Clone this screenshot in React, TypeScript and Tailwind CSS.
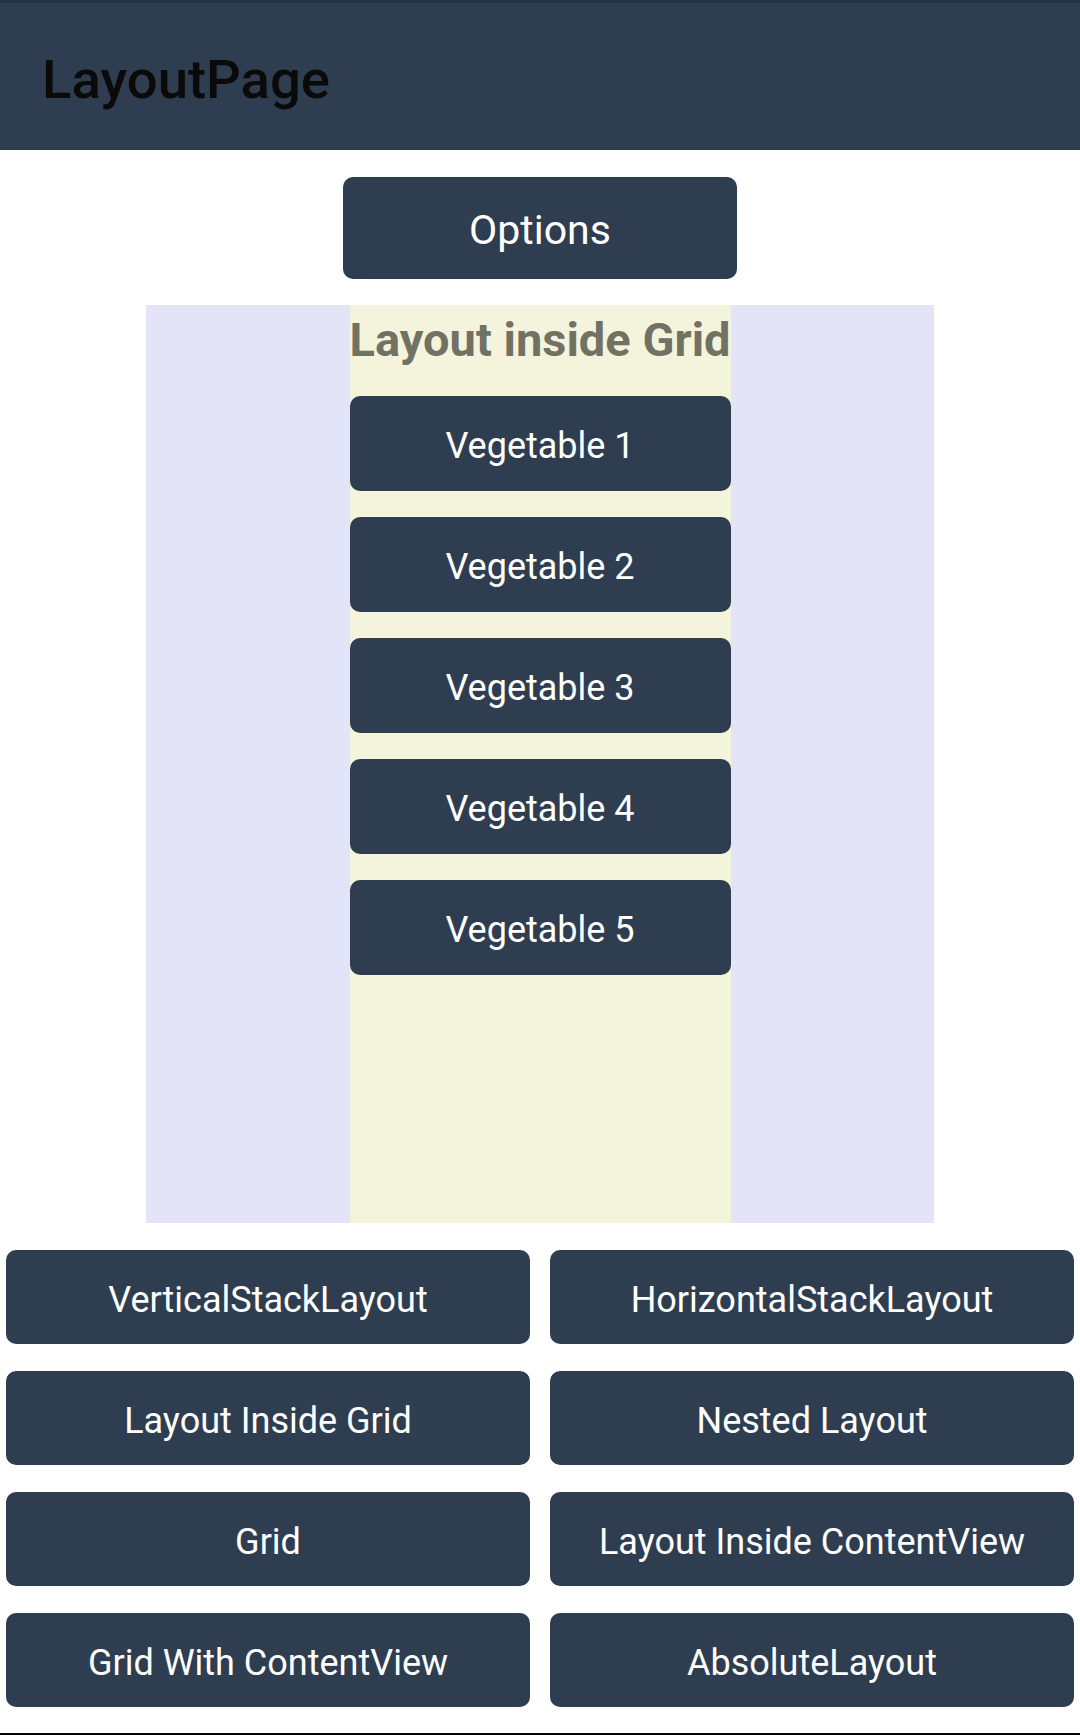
const vegetables = ["Vegetable 1", "Vegetable 2", "Vegetable 3", "Vegetable 4", "Vegetable 5"];

const layouts = [
  "VerticalStackLayout",
  "HorizontalStackLayout",
  "Layout Inside Grid",
  "Nested Layout",
  "Grid",
  "Layout Inside ContentView",
  "Grid With ContentView",
  "AbsoluteLayout",
];

const App = () => {
  return (
    <main className="h-[1735px] bg-white font-['Roboto',sans-serif] flex flex-col">
      {/* 상단 헤더 */}
      <header className="h-[150px] bg-[#2e3e50] border-t-[3px] border-[#1f3349] pl-[42px] pt-[45px]">
        <h1 className="text-[54.5px] leading-[63px] font-medium text-[#0a0a0a]">LayoutPage</h1>
      </header>

      <div className="flex justify-center mt-[27px]">
        <button className="w-[394px] h-[102px] pt-[6px] rounded-[10px] bg-[#2e3e50] text-white text-[41px] flex items-center justify-center">
          Options
        </button>
      </div>

      {/* 그리드 안의 레이아웃 */}
      <section className="mx-auto mt-[26px] w-[788px] h-[918px] bg-[#e4e4f8] flex justify-center">
        <div className="w-[381px] h-full bg-[#f4f4dc] flex flex-col">
          <h2 className="pt-[8px] text-[47px] leading-[54px] font-bold text-[#717164] text-center whitespace-nowrap">
            Layout inside Grid
          </h2>
          <div className="mt-[29px] flex flex-col gap-[26px]">
            {vegetables.map((v) => (
              <button
                key={v}
                className="h-[95px] pt-[4px] rounded-[10px] bg-[#2e3e50] text-white text-[36px] flex items-center justify-center"
              >
                {v}
              </button>
            ))}
          </div>
        </div>
      </section>

      {/* 하단 버튼 목록 */}
      <div className="grid grid-cols-2 gap-x-[20px] gap-y-[27px] px-[6px] mt-[27px]">
        {layouts.map((l) => (
          <button
            key={l}
            className="h-[94px] pt-[6px] rounded-[10px] bg-[#2e3e50] text-white text-[36px] flex items-center justify-center"
          >
            {l}
          </button>
        ))}
      </div>
      <div className="mt-auto h-[2px] bg-black" />
    </main>
  );
};

export default App;
